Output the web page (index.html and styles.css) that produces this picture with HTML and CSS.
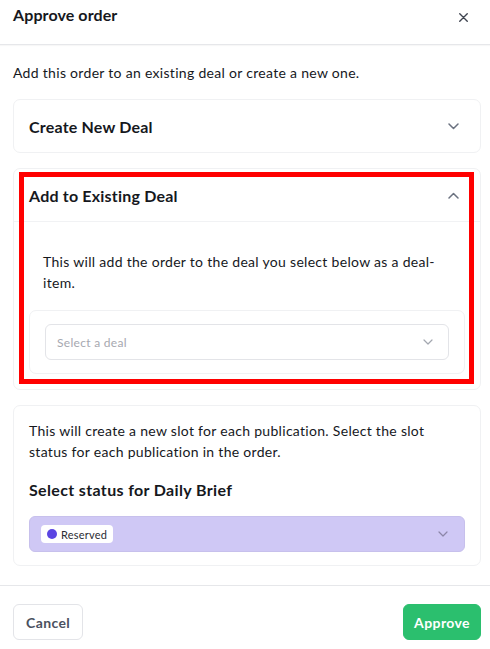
FILE: index.html
```html
<!DOCTYPE html>
<html lang="en">
<head>
<meta charset="utf-8">
<title>Approve order</title>
<link rel="stylesheet" href="styles.css">
</head>
<body>
<div class="modal">
  <header class="modal-header">
    <h1 class="modal-title">Approve order</h1>
    <button class="close-btn" aria-label="Close">
      <svg width="9" height="9" viewBox="0 0 9 9"><path d="M0.75 0.75 L8.25 8.25 M8.25 0.75 L0.75 8.25" stroke="#3f4450" stroke-width="1.4" stroke-linecap="round" fill="none"/></svg>
    </button>
  </header>

  <main class="modal-body">
    <p class="intro">Add this order to an existing deal or create a new one.</p>

    <section class="card">
      <div class="card-head">
        <span class="card-title">Create New Deal</span>
        <svg class="chev" width="11" height="7" viewBox="0 0 11 7"><path d="M1 1 L5.5 5.5 L10 1" stroke="#6b7280" stroke-width="1.5" fill="none" stroke-linecap="round" stroke-linejoin="round"/></svg>
      </div>
    </section>

    <section class="card card-open">
      <div class="card-head card-head-divided">
        <span class="card-title">Add to Existing Deal</span>
        <svg class="chev" width="11" height="7" viewBox="0 0 11 7"><path d="M1 6 L5.5 1.5 L10 6" stroke="#6b7280" stroke-width="1.5" fill="none" stroke-linecap="round" stroke-linejoin="round"/></svg>
      </div>
      <div class="card-content">
        <p class="desc">This will add the order to the deal you select below as a deal-<br>item.</p>
        <div class="inner-box">
          <div class="select">
            <span class="placeholder">Select a deal</span>
            <svg width="10" height="6" viewBox="0 0 10 6"><path d="M1 1 L5 5 L9 1" stroke="#a3a7b0" stroke-width="1.2" fill="none" stroke-linecap="round" stroke-linejoin="round"/></svg>
          </div>
        </div>
      </div>
      <div class="highlight"></div>
    </section>

    <section class="card card-status">
      <p class="status-text">This will create a new slot for each publication. Select the slot status for each publication in the order.</p>
      <h2 class="status-title">Select status for Daily Brief</h2>
      <div class="select select-purple">
        <span class="pill"><span class="dot"></span>Reserved</span>
        <svg width="10" height="6" viewBox="0 0 10 6"><path d="M1 1 L5 5 L9 1" stroke="#8c86a8" stroke-width="1.2" fill="none" stroke-linecap="round" stroke-linejoin="round"/></svg>
      </div>
    </section>
  </main>

  <footer class="modal-footer">
    <button class="btn btn-cancel">Cancel</button>
    <button class="btn btn-approve">Approve</button>
  </footer>
</div>
</body>
</html>
```

FILE: styles.css
```css
* { box-sizing: border-box; }

html, body {
  margin: 0;
  padding: 0;
  background: #ffffff;
}

body {
  font-family: "Lato", "Liberation Sans", sans-serif;
  color: #16181d;
  font-size: 14px;
  line-height: 21px;
  letter-spacing: 0.3px;
}

.modal {
  width: 490px;
}

.modal-header {
  height: 45px;
  padding: 5px 13px 0 13px;
  display: flex;
  justify-content: space-between;
  align-items: flex-start;
  border-bottom: 1px solid #e6e7ea;
  box-shadow: 0 1px 1px rgba(0,0,0,0.03);
}

.modal-title {
  margin: 0;
  font-size: 16px;
  line-height: 20px;
  font-weight: 700;
  letter-spacing: 0.1px;
  color: #16181d;
}

.close-btn {
  border: 0;
  background: transparent;
  padding: 0;
  margin: 8px 9px 0 0;
  width: 9px;
  height: 9px;
  display: flex;
}

.modal-body {
  padding: 17px 9px 0 13px;
}

.intro {
  margin: 0 0 16px 0;
}

.card {
  position: relative;
  border: 1px solid #f0f1f3;
  border-radius: 7px;
  background: #fff;
  margin-bottom: 15px;
  width: 468px;
}

.card-head {
  height: 52px;
  padding: 0 21px 0 15px;
  display: flex;
  align-items: center;
  justify-content: space-between;
}

.card-head-divided {
  border-bottom: 1px solid #f1f2f4;
  height: 53px;
}

.card-title {
  font-size: 16px;
  font-weight: 700;
  letter-spacing: 0.2px;
  color: #16181d;
}

.card-content {
  padding: 15px;
}

.desc {
  margin: 0;
  padding: 14px 15px 0 14px;
}

.inner-box {
  margin-top: 17px;
  border: 1px solid #f0f1f3;
  border-radius: 7px;
  padding: 13px 15px;
}

.select {
  height: 36px;
  border: 1px solid #e3e4e8;
  border-radius: 6px;
  display: flex;
  align-items: center;
  justify-content: space-between;
  padding: 0 15px 0 11px;
}

.placeholder {
  font-size: 12px;
  color: #a6a8b0;
}

.highlight {
  position: absolute;
  top: 3px;
  left: 5px;
  right: 6px;
  bottom: 5px;
  border: 5px solid #ff0000;
  pointer-events: none;
}

.card-status {
  padding: 14px 15px 13px 15px;
  margin-bottom: 0;
}

.status-text {
  margin: 0;
}

.status-title {
  margin: 16px 0 0 0;
  font-size: 16px;
  line-height: 24px;
  font-weight: 700;
  letter-spacing: 0.35px;
  color: #16181d;
}

.select-purple {
  margin-top: 14px;
  background: #cfc8f5;
  border-color: #c7c0ec;
  padding-right: 16px;
}

.pill {
  display: inline-flex;
  align-items: center;
  height: 18px;
  padding: 0 6px 0 6px;
  background: #fff;
  border-radius: 4px;
  font-size: 11px;
  letter-spacing: 0.2px;
  color: #2a2c33;
  gap: 4px;
}

.dot {
  width: 10px;
  height: 10px;
  border-radius: 50%;
  background: #5b45e2;
}

.modal-footer {
  margin-top: 19px;
  border-top: 1px solid #e6e7ea;
  padding: 18px 9px 16px 13px;
  display: flex;
  justify-content: space-between;
}

.btn {
  height: 36px;
  border-radius: 6px;
  font-family: inherit;
  font-size: 14px;
  font-weight: 700;
  letter-spacing: 0.4px;
  padding: 0 12px;
  cursor: pointer;
}

.btn-cancel {
  background: #fff;
  border: 1px solid #e3e4e8;
  color: #4b5160;
}

.btn-approve {
  background: #2bbf6e;
  border: 1px solid #2bbf6e;
  color: #fff;
  padding: 0 10px;
}
```
